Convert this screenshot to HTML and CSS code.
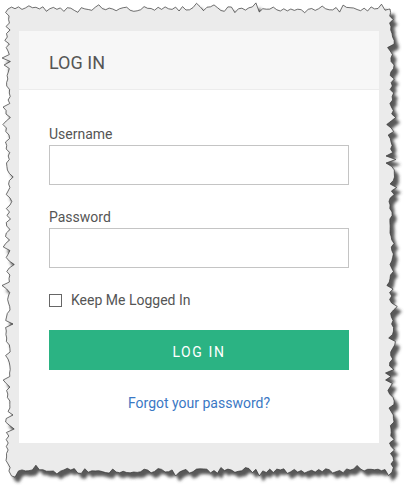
FILE: index.html
```html
<!DOCTYPE html>
<html lang="en">
<head>
    <meta charset="UTF-8" />
    <meta name="viewport" content="width=device-width, initial-scale=1.0" />
    <title>Log In</title>
    <link rel="stylesheet" href="styles.css">
</head>
<body>
    <div class="frame">
        <!-- torn paper backdrop, edge drawn by script.js -->
        <svg class="torn" width="409" height="486" viewBox="0 0 409 486">
            <defs>
                <filter id="ombra" x="-5%" y="-5%" width="115%" height="115%">
                    <feDropShadow dx="4" dy="5" stdDeviation="1.8" flood-color="#444" flood-opacity="0.9" />
                </filter>
            </defs>
            <path id="bordo" d="" fill="#ebebeb" stroke="#333" stroke-width="0.7" filter="url(#ombra)" />
        </svg>

        <div class="card">
            <div class="card-header">LOG IN</div>
            <form class="card-body" onsubmit="return false">
                <label class="field-label" for="username">Username</label>
                <input type="text" id="username" class="field" />

                <label class="field-label second" for="password">Password</label>
                <input type="password" id="password" class="field" />

                <label class="remember">
                    <span class="check"></span>
                    Keep Me Logged In
                </label>

                <button type="submit" class="btn-login">LOG IN</button>

                <div class="center">
                    <a href="#" class="forgot">Forgot your password?</a>
                </div>
            </form>
        </div>
    </div>

    <script src="script.js"></script>
</body>
</html>
```

FILE: styles.css
```css
body {
    margin: 0;
    font-family: Roboto, "Liberation Sans", Arial, sans-serif;
    background-color: white;
    color: #555;
}

.frame {
    position: relative;
    width: 409px;
    height: 486px;
    padding: 31px 0 0 19px;
    box-sizing: border-box;
}

.torn {
    position: absolute;
    left: 0;
    top: 0;
}

.card {
    position: relative;
    width: 360px;
    background-color: white;
}

.card-header {
    height: 59px;
    padding: 4px 30px 0;
    box-sizing: border-box;
    display: flex;
    align-items: center;
    background-color: #f7f7f7;
    border-bottom: 1px solid #ececec;
    font-size: 18px;
    color: #555;
}

.card-body {
    display: flex;
    flex-direction: column;
    padding: 36px 30px 30px;
    margin: 0;
}

.field-label {
    font-size: 14px;
    line-height: 17px;
    margin-bottom: 2px;
    color: #555;
}

.field-label.second {
    margin-top: 24px;
}

.field {
    height: 40px;
    box-sizing: border-box;
    border: 1px solid #c4c4c4;
    border-radius: 0;
    padding: 0 10px;
    font-size: 14px;
    outline: none;
}

.remember {
    display: flex;
    align-items: center;
    gap: 9px;
    margin-top: 22px;
    height: 20px;
    font-size: 14px;
    color: #555;
}

.check {
    width: 11px;
    height: 11px;
    border: 1px solid #666;
    background-color: white;
}

.btn-login {
    margin-top: 20px;
    height: 40px;
    padding: 3px 0 0;
    border: none;
    background-color: #2bb383;
    color: white;
    font-family: inherit;
    font-size: 14px;
    letter-spacing: 1.6px;
    cursor: pointer;
}

.btn-login:hover {
    background-color: #249d72;
}

.center {
    text-align: center;
    margin-top: 23px;
    line-height: 20px;
}

.forgot {
    font-size: 14px;
    color: #3b78c4;
    text-decoration: none;
}
```

FILE: script.js
```js
// Bordo strappato: punti con piccoli scarti pseudo-casuali
let seme = 7;
function caso() {
    seme = (seme * 9301 + 49297) % 233280;
    return seme / 233280;
}

function lato(x1, y1, x2, y2, nx, ny, punti) {
    const lunghezza = Math.hypot(x2 - x1, y2 - y1);
    const passi = Math.round(lunghezza / 3.5);
    for (let i = 0; i < passi; i++) {
        const t = i / passi;
        let scarto = (caso() - 0.5) * 5;
        if (caso() < 0.12) scarto += 4 * (caso() < 0.5 ? -1 : 1);
        punti.push([x1 + (x2 - x1) * t + nx * scarto, y1 + (y2 - y1) * t + ny * scarto]);
    }
}

const punti = [];
lato(8, 9, 392, 9, 0, 1, punti);
lato(392, 9, 392, 471, 1, 0, punti);
lato(392, 471, 8, 471, 0, 1, punti);
lato(8, 471, 8, 9, 1, 0, punti);

const d = 'M' + punti.map(p => p[0].toFixed(1) + ' ' + p[1].toFixed(1)).join(' L') + ' Z';
document.getElementById('bordo').setAttribute('d', d);
```
